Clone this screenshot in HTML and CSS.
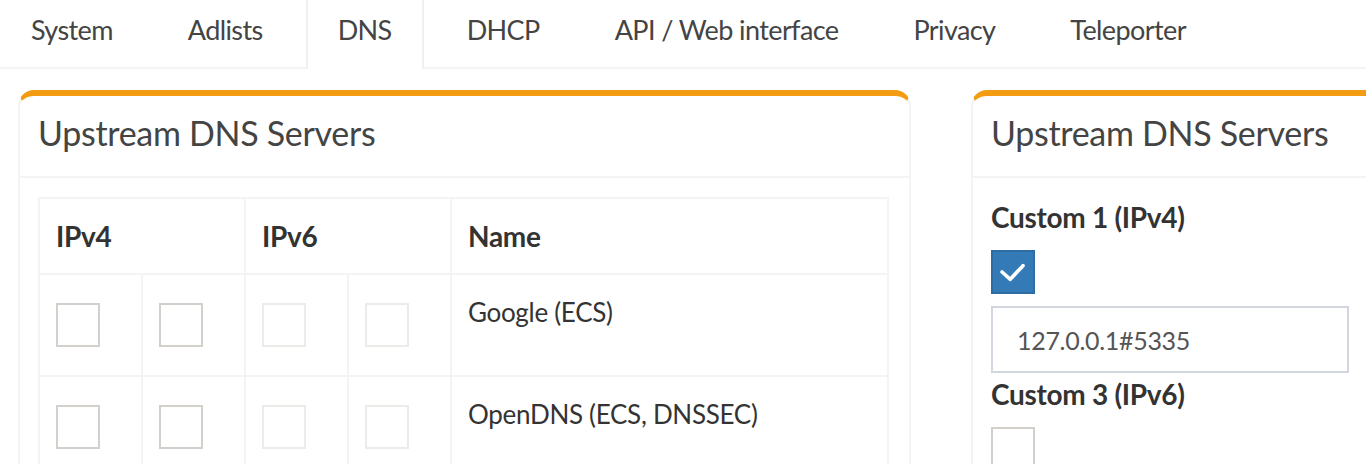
FILE: index.html
```html
<!DOCTYPE html>
<html lang="en">

<head>
  <meta charset="UTF-8">
  <meta name="viewport" content="width=device-width, initial-scale=1.0">
  <title>Settings - DNS</title>
  <link rel="stylesheet" href="styles.css">
</head>

<body>
  <ul class="tabs">
    <li>System</li>
    <li>Adlists</li>
    <li class="active">DNS</li>
    <li>DHCP</li>
    <li>API / Web interface</li>
    <li>Privacy</li>
    <li>Teleporter</li>
  </ul>

  <main class="row">
    <section class="box">
      <h3 class="box-title">Upstream DNS Servers</h3>
      <div class="box-body">
        <table class="servers">
          <colgroup>
            <col class="c-box">
            <col class="c-box">
            <col class="c-box">
            <col class="c-box">
            <col>
          </colgroup>
          <thead>
            <tr>
              <th colspan="2">IPv4</th>
              <th colspan="2">IPv6</th>
              <th>Name</th>
            </tr>
          </thead>
          <tbody>
            <tr>
              <td><span class="check"></span></td>
              <td><span class="check"></span></td>
              <td><span class="check off"></span></td>
              <td><span class="check off"></span></td>
              <td>Google (ECS)</td>
            </tr>
            <tr>
              <td><span class="check"></span></td>
              <td><span class="check"></span></td>
              <td><span class="check off"></span></td>
              <td><span class="check off"></span></td>
              <td>OpenDNS (ECS, DNSSEC)</td>
            </tr>
          </tbody>
        </table>
      </div>
    </section>

    <section class="box">
      <h3 class="box-title">Upstream DNS Servers</h3>
      <div class="box-body">
        <label class="field-label">Custom 1 (IPv4)</label>
        <span class="check on">
          <svg viewBox="0 0 44 44" width="40" height="40"><path d="M10 22 L19 30 L33 15" fill="none" stroke="#fff" stroke-width="4" stroke-linecap="round" stroke-linejoin="round"/></svg>
        </span>
        <input class="field" type="text" value="127.0.0.1#5335">
        <label class="field-label">Custom 3 (IPv6)</label>
        <span class="check"></span>
      </div>
    </section>
  </main>
</body>
</html>
```

FILE: styles.css
```css
* {
  margin: 0;
  padding: 0;
  box-sizing: border-box;
}
body {
  width: 1366px;
  height: 464px;
  overflow: hidden;
  background: #fff;
  font-family: Lato, "Liberation Sans", sans-serif;
  font-size: 26px;
  letter-spacing: -0.3px;
  line-height: 40px;
  color: #333;
}

/* tabs */
.tabs {
  display: flex;
  list-style: none;
  gap: 11px;
  margin-left: -1px;
  border-bottom: 2px solid #f4f4f4;
}
.tabs li {
  padding: 10px 30px 17px;
  border-left: 2px solid transparent;
  border-right: 2px solid transparent;
  font-size: 27px;
  letter-spacing: -0.6px;
  color: #444;
}
.tabs li.active {
  border-color: #f0f0f0;
  background: #fff;
  margin-bottom: -2px;
  padding-bottom: 19px;
}

/* boxes */
.row {
  display: flex;
  gap: 60px;
  padding: 21px 0 0 18px;
}
.box {
  flex: 0 0 893px;
  border: 2px solid #f4f4f4;
  border-top: 6px solid #f39c12;
  border-radius: 16px 16px 0 0;
  height: 420px;
}
.box-title {
  font-size: 34px;
  font-weight: 400;
  line-height: 38px;
  color: #444;
  padding: 18px 18px 24px;
  border-bottom: 2px solid #f4f4f4;
}
.box-body {
  padding: 19px 18px;
}

/* table */
.servers {
  width: 851px;
  table-layout: fixed;
  border-collapse: collapse;
  border: 2px solid #f4f4f4;
}
.servers .c-box {
  width: 103px;
}
.servers th,
.servers td {
  border: 2px solid #f4f4f4;
  padding: 17px 16px;
  text-align: left;
  vertical-align: top;
}
.servers th {
  font-size: 28px;
  font-weight: 700;
}
.servers td .check {
  margin: 11px 0;
}

/* checkboxes */
.check {
  display: block;
  width: 44px;
  height: 44px;
  border: 2px solid #d3cfca;
  background: #fff;
}
.check.off {
  border-color: #ebebe8;
}
.check.on {
  display: flex;
  align-items: center;
  justify-content: center;
  background: #337ab7;
  border-color: #2e6da4;
}

/* form */
.field-label {
  display: block;
  font-size: 28px;
  font-weight: 700;
  margin-top: 1px;
}
.field-label:first-child {
  margin-top: 0;
}
.box-body > .check {
  margin-top: 13px;
}
.field {
  display: block;
  width: 358px;
  height: 67px;
  margin-top: 12px;
  padding: 0 24px;
  border: 2px solid #d2d6de;
  font-family: inherit;
  font-size: 25px;
  letter-spacing: -0.3px;
  color: #555;
  outline: none;
}
```
